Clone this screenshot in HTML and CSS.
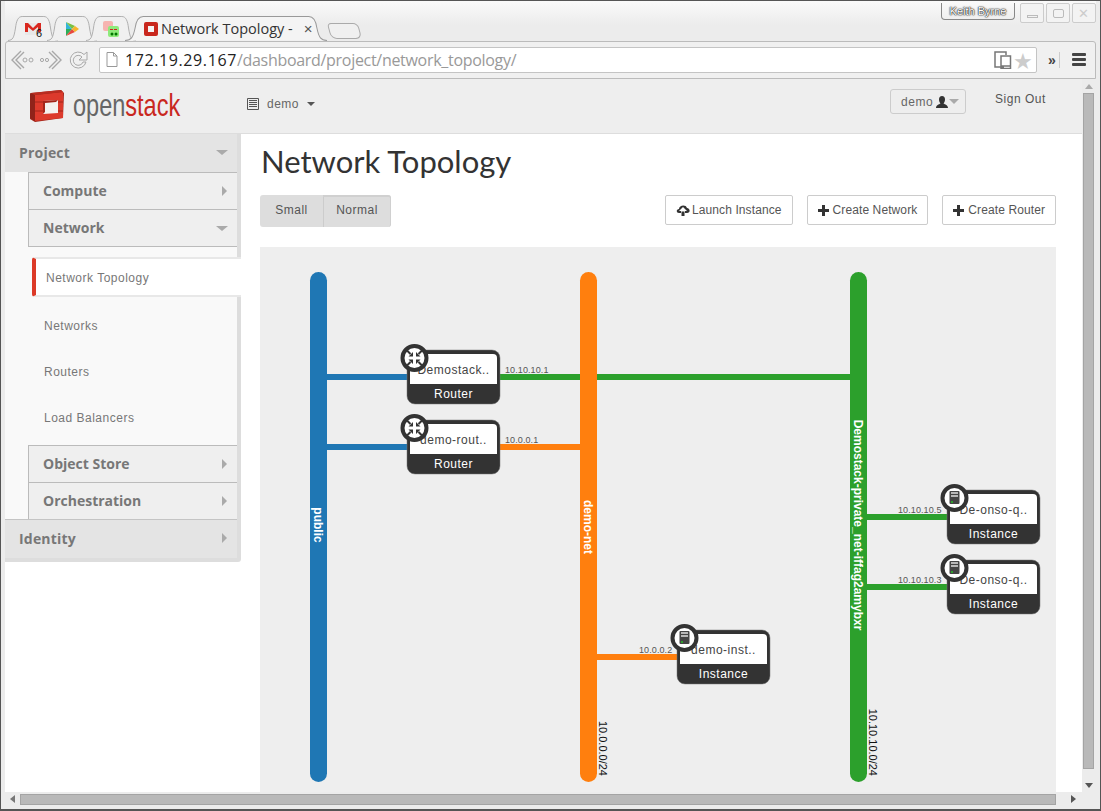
FILE: index.html
```html
<!DOCTYPE html>
<html>

<head>
    <meta charset="utf-8">
    <link rel="stylesheet" href="styles.css">
    <title>Network Topology</title>
</head>

<body>
    <div class="window">

        <div class="tabstrip">
            <div class="tab tab-small">
                <svg class="tab-shape" viewBox="0 0 60 25" preserveAspectRatio="none"><path d="M0 24.5C6 24 7 22 9 12 10 5 12 .5 17 .5H43C48 .5 50 5 51 12 53 22 54 24 60 24.5" /></svg>
                <svg class="favicon" viewBox="0 0 16 16"><path d="M0 2h16v12H0z" fill="#e8e8e8" /><path d="M0 2h3l5 5 5-5h3v9h-3V6L8 10 3 6v5H0z" fill="#d9281f" /></svg>
                <span class="badge">6</span>
            </div>
            <div class="tab tab-small">
                <svg class="tab-shape" viewBox="0 0 60 25" preserveAspectRatio="none"><path d="M0 24.5C6 24 7 22 9 12 10 5 12 .5 17 .5H43C48 .5 50 5 51 12 53 22 54 24 60 24.5" /></svg>
                <svg class="favicon" viewBox="0 0 16 16"><path d="M2 1v7l6 0z" fill="#33b5d8" /><path d="M2 15V8l6 0z" fill="#2fae5a" /><path d="M2 1l6 7 3-3z" fill="#7ac143" /><path d="M2 15l6-7 3 3z" fill="#e8483f" /><path d="M11 5l4 3-4 3-3-3z" fill="#f7b52c" /></svg>
            </div>
            <div class="tab tab-small">
                <svg class="tab-shape" viewBox="0 0 60 25" preserveAspectRatio="none"><path d="M0 24.5C6 24 7 22 9 12 10 5 12 .5 17 .5H43C48 .5 50 5 51 12 53 22 54 24 60 24.5" /></svg>
                <svg class="favicon" viewBox="0 0 16 16"><rect x="0" y="0" width="10" height="10" rx="2" fill="#f6b4b0" /><rect x="5" y="5" width="11" height="11" rx="2" fill="#8eea7a" /><path d="M7 8h3v1H7zM11 8h3v1h-3z" fill="#c22" /><circle cx="9" cy="13" r="1.5" fill="#070" /><circle cx="13" cy="13" r="1.5" fill="#070" /></svg>
            </div>
            <div class="tab tab-active">
                <svg class="tab-shape" viewBox="0 0 200 25" preserveAspectRatio="none"><path d="M0 24.5C6 24 8 22 10 12 11 5 13 .5 18 .5H182C187 .5 189 5 190 12 192 22 194 24 200 24.5" /></svg>
                <svg class="favicon" viewBox="0 0 16 16"><rect x="1" y="1" width="14" height="14" rx="2" fill="#c9281e" /><rect x="5" y="5" width="6" height="6" fill="#f5f5f5" /></svg>
                <span class="tab-title">Network Topology -</span>
                <span class="tab-close">×</span>
            </div>
            <div class="tab-new"></div>
            <div class="tabstrip-right">
                <div class="profile">Keith Byrne</div>
                <div class="winbtn"><i class="win-min"></i></div>
                <div class="winbtn"><i class="win-max"></i></div>
                <div class="winbtn win-x">✕</div>
            </div>
        </div>

        <div class="toolbar">
            <svg class="nav-icon" viewBox="0 0 24 22"><path d="M11 2 2 11l9 9M14 3 6 11l8 8" fill="none" stroke="#a8a8a8" stroke-width="1.4" /><circle cx="15" cy="11" r="2" fill="none" stroke="#a8a8a8" /><circle cx="21" cy="11" r="2" fill="none" stroke="#a8a8a8" /></svg>
            <svg class="nav-icon" viewBox="0 0 24 22"><path d="M13 2l9 9-9 9M10 3l8 8-8 8" fill="none" stroke="#a8a8a8" stroke-width="1.4" /><circle cx="3" cy="11" r="1.6" fill="none" stroke="#a8a8a8" /><circle cx="8" cy="11" r="1.6" fill="none" stroke="#a8a8a8" /></svg>
            <svg class="nav-icon reload" viewBox="0 0 22 22"><path d="M18 13a8 8 0 1 1-2-7.5L19 3v8h-8l3-3a5 5 0 1 0 1 5z" fill="#f2f2f2" stroke="#a8a8a8" /></svg>
            <div class="address">
                <svg class="page-icon" viewBox="0 0 12 15"><path d="M1 .5h6.500L11 4v10.500H1zM7.500 .5V4H11" fill="#fff" stroke="#999" /></svg>
                <span class="host">172.19.29.167</span><span class="path">/dashboard/project/network_topology/</span>
                <svg class="device-icon" viewBox="0 0 18 18"><path d="M10 16H1V1h11v3M7 5h9.500v12.500H7zM7 15h9.500" fill="none" stroke="#777" stroke-width="1.500" /></svg>
                <span class="star">★</span>
            </div>
            <span class="overflow">»</span>
            <div class="menu"><i></i><i></i><i></i></div>
        </div>

        <div class="viewport">
            <div class="page">
                <div class="header">
                    <svg class="logo" viewBox="0 0 36 34">
                        <path d="M2 4 32 1l3 3-1 25-28 4-5-3z" fill="#a3261b" />
                        <path d="M6 6 34 3v26L6 32z" fill="#dc3a2c" />
                        <path d="M1 4 6 6v26l-5-3z" fill="#8f231a" />
                        <path d="M6 6 34 3l-2-2L2 4z" fill="#b92d21" />
                        <path d="M14 12 29 11v13l-15 1z" fill="#f4f2f0" />
                        <path d="M14 12 29 11l-2 2-11 1v9l-2 2z" fill="#a3261b" />
                        <path d="M6 13h8M6 22h8M29 13h5M29 22h5" stroke="#a3261b" />
                    </svg>
                    <div class="brand"><span class="brand-open">open</span><span class="brand-stack">stack</span></div>
                    <div class="project-pick">
                        <svg class="list-icon" viewBox="0 0 12 12"><path d="M.5 .5h11v11H.5zM2 2.500h8M2 4.500h8M2 6.500h8M2 8.500h8" fill="#eee" stroke="#555" /></svg>
                        <span>demo</span>
                        <i class="caret-down caret-dark"></i>
                    </div>
                    <div class="user-pick">
                        <span>demo</span>
                        <svg class="user-icon" viewBox="0 0 12 12"><path d="M6 0c2 0 3 1.500 3 3.500S8 7 7.500 7.500C9 8.500 12 9 12 12H0c0-3 3-3.500 4.500-4.500C4 7 3 5.500 3 3.500S4 0 6 0z" fill="#333" /></svg>
                        <i class="caret-down caret-user"></i>
                    </div>
                    <a class="signout">Sign Out</a>
                </div>

                <div class="columns">
                    <div class="sidebar">
                        <div class="dash-head">Project<i class="caret-down"></i></div>
                        <div class="dash-body">
                            <div class="panel-head">Compute<i class="caret-right"></i></div>
                            <div class="panel-head">Network<i class="caret-down"></i></div>
                            <ul class="panel-list">
                                <li class="active">Network Topology</li>
                                <li>Networks</li>
                                <li>Routers</li>
                                <li>Load Balancers</li>
                            </ul>
                            <div class="panel-head">Object Store<i class="caret-right"></i></div>
                            <div class="panel-head">Orchestration<i class="caret-right"></i></div>
                        </div>
                        <div class="dash-head dash-last">Identity<i class="caret-right"></i></div>
                    </div>

                    <div class="main">
                        <h1>Network Topology</h1>
                        <div class="actions">
                            <div class="btn-group">
                                <div class="seg">Small</div>
                                <div class="seg seg-on">Normal</div>
                            </div>
                            <div class="action-btns">
                                <div class="btn">
                                    <svg class="btn-icon" viewBox="0 0 14 12"><path d="M3 9C0 9 0 5 3 5c0-4 7-5 8-1 3 0 4 5 0 5H9V7l2 0-4-4-4 4h2v2zM5.500 7.500h3V12h-3z" fill="#333" /></svg>
                                    Launch Instance
                                </div>
                                <div class="btn"><i class="plus"></i>Create Network</div>
                                <div class="btn"><i class="plus"></i>Create Router</div>
                            </div>
                        </div>

                        <div class="topology">
                            <svg class="topo-svg" width="796" height="545" viewBox="0 0 796 545">
                                <defs>
                                    <g id="router-icon">
                                        <circle r="12" fill="#fff" stroke="#333" stroke-width="4" />
                                        <path d="M-7.500-7.500-4-4M7.500-7.500 4-4M-7.500 7.500-4 4M7.500 7.500 4 4" stroke="#333" stroke-width="2" />
                                        <path d="M-1.500-1.500V-6L-6-1.500zM1.500-1.500V-6L6-1.500zM-1.500 1.500V6L-6 1.500zM1.500 1.500V6L6 1.500z" fill="#333" />
                                    </g>
                                    <g id="server-icon">
                                        <circle r="12" fill="#fff" stroke="#333" stroke-width="4" />
                                        <rect x="-5" y="-7" width="10" height="13" rx="1" fill="#444" />
                                        <path d="M-3.500-5H3.500M-3.500-2H3.500" stroke="#ddd" stroke-width="1.600" />
                                        <rect x="-3.500" y="3" width="2" height="2" fill="#2ca02c" />
                                    </g>
                                    <g id="node-box">
                                        <rect width="93" height="54" rx="8" fill="#333" stroke="#777" stroke-width=".5" />
                                        <path d="M3 34V8a4 4 0 0 1 4-4H86a4 4 0 0 1 4 4V34z" fill="#fff" />
                                    </g>
                                </defs>

                                <rect class="link-blue" x="67" y="127" width="80" height="6" />
                                <rect class="link-blue" x="67" y="197" width="80" height="6" />
                                <rect class="link-green" x="240" y="127" width="350" height="6" />
                                <rect class="link-orange" x="240" y="197" width="80" height="6" />
                                <rect class="link-orange" x="337" y="407" width="80" height="6" />
                                <rect class="link-green" x="607" y="267" width="80" height="6" />
                                <rect class="link-green" x="607" y="337" width="80" height="6" />

                                <rect class="link-blue" x="50" y="25" width="17" height="510" rx="8.500" />
                                <rect class="link-orange" x="320" y="25" width="17" height="510" rx="8.500" />
                                <rect class="link-green" x="590" y="25" width="17" height="510" rx="8.500" />

                                <text class="net-name" transform="translate(54,278) rotate(90)" text-anchor="middle">public</text>
                                <text class="net-name" transform="translate(324,280) rotate(90)" text-anchor="middle">demo-net</text>
                                <text class="net-name" transform="translate(594,278) rotate(90)" text-anchor="middle">Demostack-private_net-iffag2amybxr</text>
                                <text class="subnet" transform="translate(339,529) rotate(90)" text-anchor="end">10.0.0.0/24</text>
                                <text class="subnet" transform="translate(609,529) rotate(90)" text-anchor="end">10.10.10.0/24</text>

                                <text class="ip" x="245" y="126">10.10.10.1</text>
                                <text class="ip" x="245" y="196">10.0.0.1</text>
                                <text class="ip" x="379" y="406">10.0.0.2</text>
                                <text class="ip" x="638" y="266">10.10.10.5</text>
                                <text class="ip" x="638" y="336">10.10.10.3</text>

                                <g transform="translate(147,103)">
                                    <use href="#node-box" />
                                    <text class="node-name" x="46.500" y="24" text-anchor="middle">Demostack..</text>
                                    <text class="node-type" x="46.500" y="48" text-anchor="middle">Router</text>
                                    <use href="#router-icon" x="7.500" y="8" />
                                </g>
                                <g transform="translate(147,173)">
                                    <use href="#node-box" />
                                    <text class="node-name" x="46.500" y="24" text-anchor="middle">demo-rout..</text>
                                    <text class="node-type" x="46.500" y="48" text-anchor="middle">Router</text>
                                    <use href="#router-icon" x="7.500" y="8" />
                                </g>
                                <g transform="translate(687,243)">
                                    <use href="#node-box" />
                                    <text class="node-name" x="46.500" y="24" text-anchor="middle">De-onso-q..</text>
                                    <text class="node-type" x="46.500" y="48" text-anchor="middle">Instance</text>
                                    <use href="#server-icon" x="7.500" y="8" />
                                </g>
                                <g transform="translate(687,313)">
                                    <use href="#node-box" />
                                    <text class="node-name" x="46.500" y="24" text-anchor="middle">De-onso-q..</text>
                                    <text class="node-type" x="46.500" y="48" text-anchor="middle">Instance</text>
                                    <use href="#server-icon" x="7.500" y="8" />
                                </g>
                                <g transform="translate(417,383)">
                                    <use href="#node-box" />
                                    <text class="node-name" x="46.500" y="24" text-anchor="middle">demo-inst..</text>
                                    <text class="node-type" x="46.500" y="48" text-anchor="middle">Instance</text>
                                    <use href="#server-icon" x="7.500" y="8" />
                                </g>
                            </svg>
                        </div>
                    </div>
                </div>
            </div>

            <div class="vscroll">
                <i class="arrow-up"></i>
                <div class="vthumb"></div>
                <i class="arrow-down"></i>
            </div>
            <div class="hscroll">
                <i class="arrow-left"></i>
                <div class="hthumb"></div>
                <i class="arrow-right"></i>
            </div>
            <div class="corner"></div>
        </div>
    </div>
</body>

</html>
```

FILE: styles.css
```css
* {
    box-sizing: border-box;
}

html, body {
    margin: 0;
    height: 100%;
    overflow: hidden;
    background: #fff;
}

body {
    font-family: "Liberation Sans", sans-serif;
    font-size: 12px;
    letter-spacing: .5px;
    color: #666;
}

.window {
    width: 1101px;
    height: 811px;
    display: flex;
    flex-direction: column;
    background: #ececec;
    border: 1px solid #555;
    border-bottom-width: 2px;
    padding: 0 4px 3px;
}

/* browser tabs */
.tabstrip {
    height: 40px;
    flex: none;
    display: flex;
    align-items: flex-end;
    padding-left: 3px;
    background: linear-gradient(#fafafa, #ececec 60%);
}

.tab {
    position: relative;
    height: 25px;
    display: flex;
    align-items: center;
    margin-right: -11px;
}

.tab-small {
    width: 50px;
    justify-content: center;
}

.tab-active {
    width: 202px;
    padding-left: 18px;
    z-index: 2;
}

.tab-shape {
    position: absolute;
    left: 0;
    top: 0;
    width: 100%;
    height: 100%;
    fill: #f0f0f0;
    stroke: #aaa;
}

.tab-active .tab-shape {
    fill: #f4f4f4;
    stroke: #999;
}

.favicon {
    position: relative;
    width: 16px;
    height: 16px;
    flex: none;
}

.badge {
    position: absolute;
    left: 28px;
    top: 11px;
    font-size: 11px;
    color: #111;
    letter-spacing: 0;
}

.tab-title {
    position: relative;
    margin-left: 2px;
    font-family: "Open Sans", sans-serif;
    font-size: 14.500px;
    letter-spacing: 0;
    color: #333;
    white-space: nowrap;
}

.tab-close {
    position: relative;
    margin-left: 11px;
    font-size: 15px;
    color: #555;
}

.tab-new {
    width: 31px;
    height: 16px;
    margin: 0 0 2px 13px;
    border: 1px solid #aaa;
    border-radius: 4px 5px 6px 6px;
    background: #f0f0f0;
    transform: skewX(15deg);
}

.tabstrip-right {
    margin-left: auto;
    align-self: flex-start;
    display: flex;
    align-items: flex-start;
    margin-top: 2px;
}

.profile {
    width: 74px;
    height: 17px;
    margin-right: 3px;
    border: 1px solid #888;
    border-top: 0;
    border-radius: 0 0 4px 4px;
    text-align: center;
    line-height: 16px;
    font-size: 11px;
    letter-spacing: 0;
    color: #fff;
    text-shadow: 0 0 1px #222, 0 0 1px #222, 0 0 2px #222;
}

.winbtn {
    width: 24px;
    height: 20px;
    margin-left: 2px;
    border: 1px solid #ccc;
    border-radius: 2px;
    display: flex;
    align-items: center;
    justify-content: center;
    background: #f3f3f3;
}

.win-x {
    color: #ccc;
    font-size: 13px;
}

.win-min {
    width: 11px;
    height: 3px;
    margin-top: 6px;
    border: 1px solid #bbb;
}

.win-max {
    width: 11px;
    height: 9px;
    border: 1px solid #bbb;
    border-radius: 2px;
}

/* address bar row */
.toolbar {
    height: 38px;
    flex: none;
    display: flex;
    align-items: center;
    padding: 0 8px 1px 4px;
    border: 1px solid #bbb;
    border-radius: 3px 3px 0 0;
    background: #f0f0f0;
}

.nav-icon {
    width: 24px;
    height: 22px;
    margin-right: 5px;
    flex: none;
}

.reload {
    width: 22px;
    margin-right: 9px;
}

.address {
    width: 938px;
    height: 26px;
    display: flex;
    align-items: center;
    padding: 0 3px 0 6px;
    background: #fff;
    border: 1px solid #c4c4c4;
    border-radius: 2px;
    font-family: "Open Sans", sans-serif;
    font-size: 16px;
    letter-spacing: 0;
}

.page-icon {
    width: 12px;
    height: 15px;
    margin-right: 7px;
}

.host {
    color: #222;
    letter-spacing: .6px;
}

.path {
    color: #999;
    letter-spacing: -.3px;
}

.device-icon {
    width: 18px;
    height: 18px;
    margin-left: auto;
}

.star {
    margin-left: 1px;
    font-size: 22px;
    color: #ccc;
    line-height: 22px;
}

.overflow {
    margin-left: 11px;
    font-size: 14px;
    font-weight: bold;
    color: #444;
    padding-right: 3px;
    border-right: 1px solid #ccc;
}

.menu {
    width: 14px;
    margin-left: 12px;
}

.menu i {
    display: block;
    height: 3px;
    margin: 2px 0;
    background: #444;
    border-radius: 1px;
}

/* page + scrollbars */
.viewport {
    flex: 1;
    min-height: 0;
    display: grid;
    grid-template-columns: 1fr 14px;
    grid-template-rows: 1fr 14px;
}

.page {
    min-width: 0;
    min-height: 0;
    overflow: hidden;
    background: #fff;
}

.header {
    height: 55px;
    display: flex;
    align-items: flex-start;
    background: #eee;
    border-bottom: 1px solid #ddd;
    padding-left: 24px;
}

.logo {
    width: 36px;
    height: 34px;
    flex: none;
    margin-top: 10px;
}

.brand {
    width: 108px;
    margin: 9px 0 0 8px;
    font-family: "Liberation Sans", sans-serif;
    font-size: 32px;
    letter-spacing: 0;
    line-height: 34px;
    white-space: nowrap;
    transform: scaleX(.735);
    transform-origin: left;
}

.brand-open {
    color: #666;
}

.brand-stack {
    color: #c9281e;
}

.project-pick {
    display: flex;
    align-items: center;
    margin: 18px 0 0 66px;
    color: #666;
}

.list-icon {
    width: 12px;
    height: 12px;
    margin-right: 8px;
}

.project-pick .caret-dark {
    margin-left: 8px;
}

.user-pick {
    height: 25px;
    margin: 10px 0 0 575px;
    width: 76px;
    display: flex;
    align-items: center;
    padding-left: 10px;
    border: 1px solid #ccc;
    border-radius: 3px;
}

.user-icon {
    width: 12px;
    height: 12px;
    margin-left: 3px;
}

.caret-user {
    margin-left: 1px;
}

.signout {
    margin: 13px 0 0 29px;
    color: #555;
}

.columns {
    display: flex;
    height: 659px;
}

/* left nav */
.sidebar {
    width: 236px;
    flex: none;
    align-self: flex-start;
    background: #f9f9f9;
    border-right: 4px solid #ddd;
    border-radius: 0 0 3px 0;
}

.dash-head {
    position: relative;
    height: 38px;
    line-height: 38px;
    padding-left: 14px;
    background: #e4e4e4;
    font-family: "Open Sans", sans-serif;
    font-size: 14px;
    font-weight: bold;
    letter-spacing: .2px;
    color: #777;
}

.dash-last {
    height: 43px;
    line-height: 38px;
    border-top: 1px solid #c4c4c4;
    border-bottom: 4px solid #ddd;
}

.panel-head {
    position: relative;
    height: 37px;
    line-height: 36px;
    margin-left: 23px;
    padding-left: 14px;
    background: #efefef;
    border-top: 1px solid #bbb;
    border-left: 1px solid #bbb;
    font-family: "Open Sans", sans-serif;
    font-size: 14px;
    font-weight: bold;
    letter-spacing: 0;
    color: #777;
}

.panel-list {
    margin: 0 0 0 23px;
    padding: 10px 0 4px;
    list-style: none;
    border-top: 1px solid #bbb;
}

.panel-list li {
    height: 46px;
    line-height: 46px;
    padding-left: 16px;
    color: #777;
}

.panel-list li.active {
    position: relative;
    width: 209px;
    height: 40px;
    line-height: 38px;
    margin: 0 0 6px 4px;
    padding-left: 10px;
    background: #fff;
    border-top: 2px solid #e8e8e8;
    border-bottom: 2px solid #e8e8e8;
    border-left: 4px solid #dc3a28;
    border-radius: 3px 0 0 3px;
    color: #777;
}

.caret-down,
.caret-right,
.arrow-up,
.arrow-down,
.arrow-left,
.arrow-right {
    display: block;
    width: 0;
    height: 0;
    border-style: solid;
    border-color: transparent;
}

.caret-down {
    border-width: 5px 5px 0;
    border-top-color: #aaa;
}

.caret-right {
    border-width: 5px 0 5px 5px;
    border-left-color: #aaa;
}

.dash-head .caret-down,
.panel-head .caret-down {
    position: absolute;
    right: 9px;
    top: 16px;
    border-width: 5px 6px 0;
}

.dash-head .caret-right,
.panel-head .caret-right {
    position: absolute;
    right: 10px;
    top: 13px;
}

.caret-dark {
    border-width: 4px 4px 0;
    border-top-color: #555;
}

/* main column */
.main {
    flex: 1;
    min-width: 0;
    padding: 0 26px 0 19px;
}

h1 {
    margin: 0 0 0 1px;
    height: 61px;
    padding-top: 7px;
    font-family: "Lato", sans-serif;
    font-size: 31px;
    font-weight: normal;
    line-height: 40px;
    letter-spacing: 0;
    color: #333;
}

.actions {
    height: 52px;
    display: flex;
    align-items: flex-start;
    justify-content: space-between;
}

.btn-group {
    display: flex;
    height: 32px;
    width: 131px;
    background: #ddd;
    border-radius: 3px;
    color: #555;
}

.seg {
    width: 63px;
    line-height: 31px;
    text-align: center;
}

.seg-on {
    width: 68px;
    border-left: 1px solid #ccc;
    border-top: 2px solid #d0d0d0;
    border-right: 1px solid #d0d0d0;
    line-height: 27px;
    border-radius: 0 3px 3px 0;
}

.action-btns {
    display: flex;
    gap: 14px;
}

.btn {
    height: 30px;
    display: flex;
    align-items: center;
    padding: 0 10px;
    background: #fff;
    border: 1px solid #ccc;
    border-radius: 2px;
    color: #555;
    letter-spacing: .1px;
    white-space: nowrap;
}

.btn-icon {
    width: 14px;
    height: 12px;
    margin-right: 2px;
}

.plus {
    position: relative;
    width: 11px;
    height: 3px;
    margin-right: 4px;
    background: #333;
}

.plus::after {
    content: "";
    position: absolute;
    left: 4px;
    top: -4px;
    width: 3px;
    height: 11px;
    background: #333;
}

/* the diagram */
.topology {
    width: 796px;
    height: 545px;
    background: #eee;
}

.topo-svg {
    display: block;
}

.link-blue {
    fill: #1f77b4;
}

.link-orange {
    fill: #ff7f0e;
}

.link-green {
    fill: #2ca02c;
}

.net-name {
    font-size: 12px;
    font-weight: bold;
    letter-spacing: 0;
    fill: #fff;
}

.subnet {
    font-size: 11px;
    letter-spacing: 0;
    fill: #111;
}

.ip {
    font-size: 9px;
    letter-spacing: .1px;
    fill: #555;
}

.node-name {
    font-size: 12px;
    fill: #444;
}

.node-type {
    font-size: 12px;
    fill: #fff;
}

/* scrollbars */
.vscroll {
    position: relative;
    background: #ececec;
    display: flex;
    flex-direction: column;
    align-items: center;
    padding: 5px 2px 4px 1px;
}

.vthumb {
    width: 11px;
    flex: 1;
    margin: 4px 0 14px;
    background: #b9b9b9;
    border: 1px solid #a4a4a4;
}

.hscroll {
    display: flex;
    align-items: center;
    background: #ececec;
    padding: 0 6px 0 5px;
}

.hthumb {
    flex: 1;
    height: 11px;
    margin: 0 15px 0 5px;
    background: #b9b9b9;
    border: 1px solid #a4a4a4;
}

.corner {
    background: #ececec;
}

.arrow-up {
    border-width: 0 4px 5px;
    border-bottom-color: #aaa;
}

.arrow-down {
    border-width: 5px 4px 0;
    border-top-color: #555;
}

.arrow-left {
    border-width: 4px 5px 4px 0;
    border-right-color: #777;
}

.arrow-right {
    border-width: 4px 0 4px 5px;
    border-left-color: #555;
}
```
